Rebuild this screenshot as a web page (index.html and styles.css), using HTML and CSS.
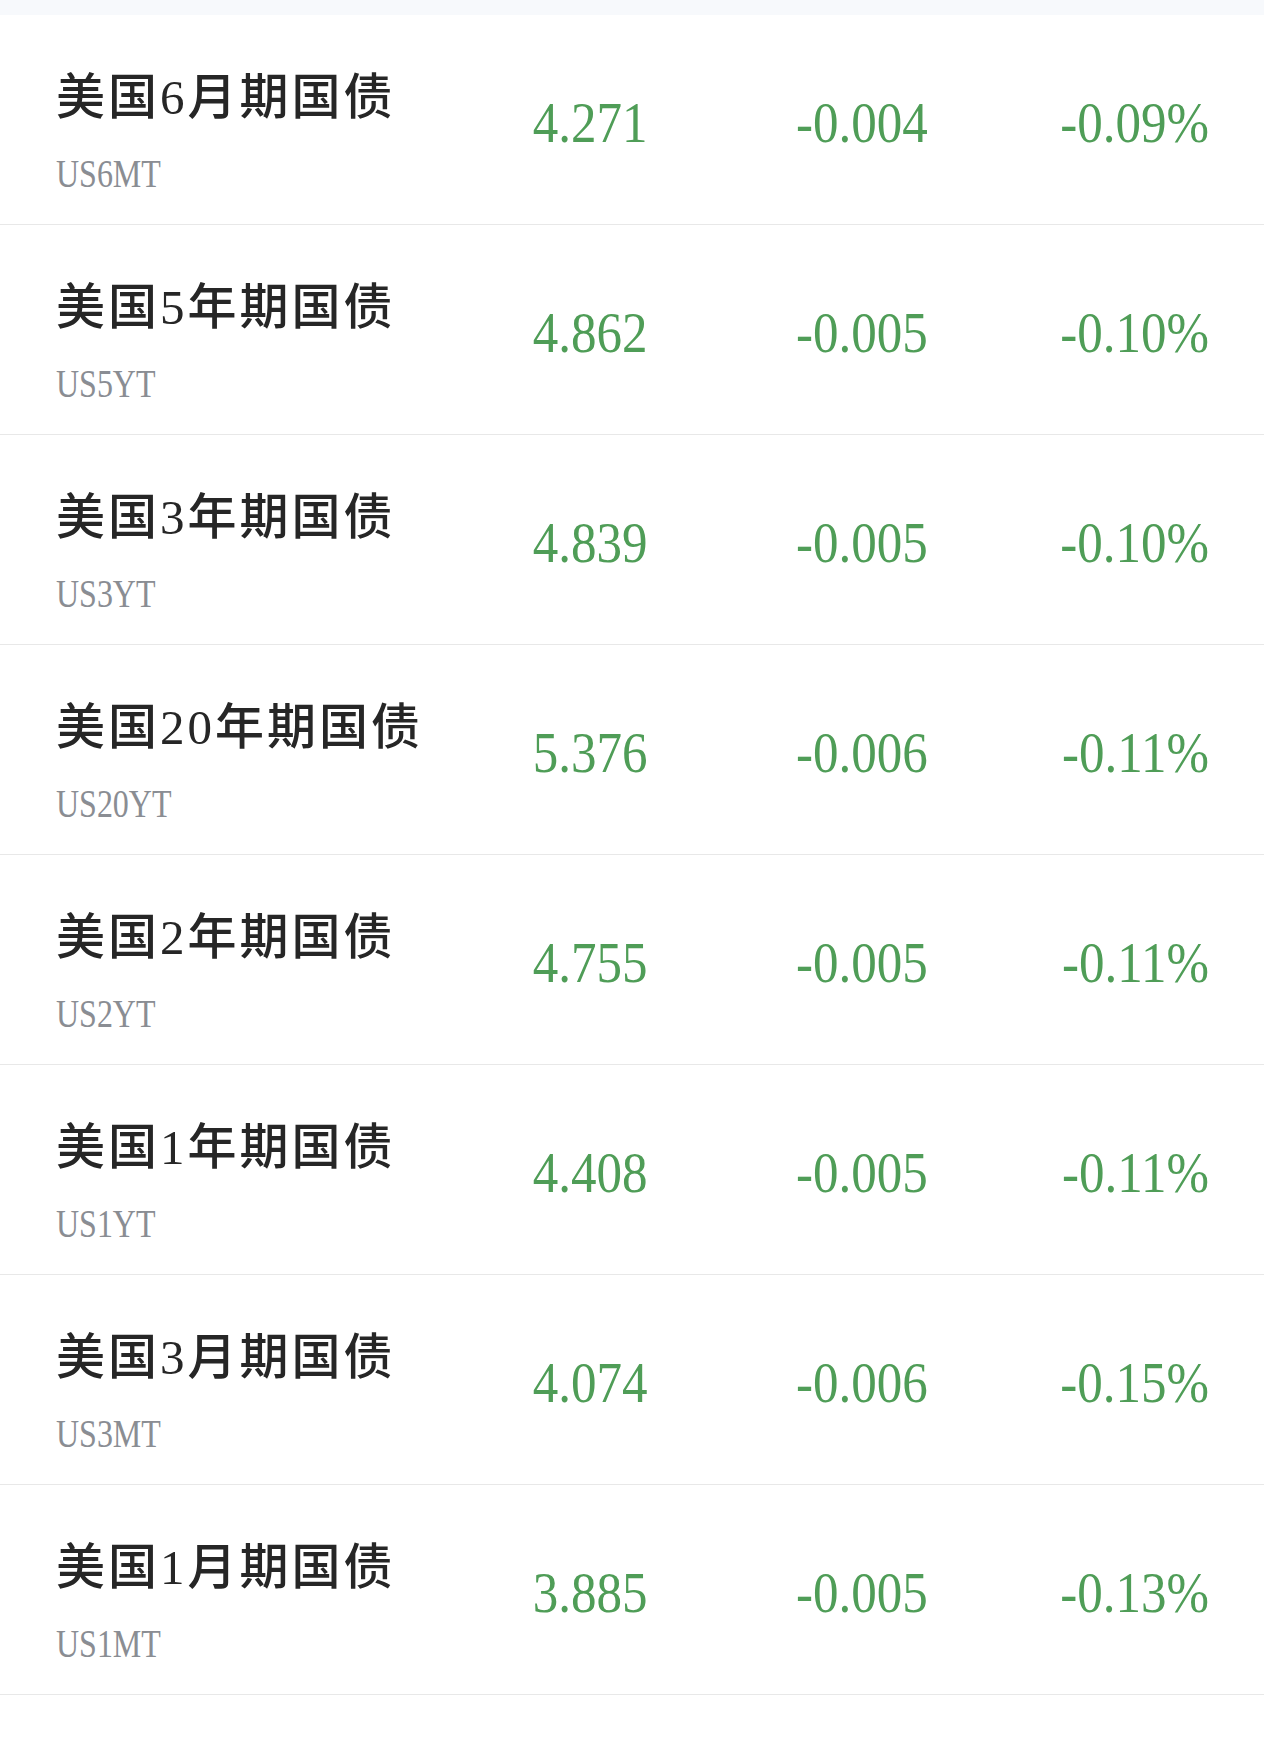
FILE: index.html
```html
<!DOCTYPE html>
<html lang="zh-CN">
<head>
  <meta charset="utf-8">
  <meta name="viewport" content="width=device-width, initial-scale=1.0">
  <title>美国国债收益率</title>
  <link rel="stylesheet" href="styles.css">
</head>

<body>
  <div class="top-strip"></div>

  <main class="quote-list">
    <div class="quote-row">
      <div class="name">
        <p class="title">美国6月期国债</p>
        <p class="code"><span>US6MT</span></p>
      </div>
      <div class="cell"><span>4.271</span></div>
      <div class="cell"><span>-0.004</span></div>
      <div class="cell"><span>-0.09%</span></div>
    </div>

    <div class="quote-row">
      <div class="name">
        <p class="title">美国5年期国债</p>
        <p class="code"><span>US5YT</span></p>
      </div>
      <div class="cell"><span>4.862</span></div>
      <div class="cell"><span>-0.005</span></div>
      <div class="cell"><span>-0.10%</span></div>
    </div>

    <div class="quote-row">
      <div class="name">
        <p class="title">美国3年期国债</p>
        <p class="code"><span>US3YT</span></p>
      </div>
      <div class="cell"><span>4.839</span></div>
      <div class="cell"><span>-0.005</span></div>
      <div class="cell"><span>-0.10%</span></div>
    </div>

    <div class="quote-row">
      <div class="name">
        <p class="title">美国20年期国债</p>
        <p class="code"><span>US20YT</span></p>
      </div>
      <div class="cell"><span>5.376</span></div>
      <div class="cell"><span>-0.006</span></div>
      <div class="cell"><span>-0.11%</span></div>
    </div>

    <div class="quote-row">
      <div class="name">
        <p class="title">美国2年期国债</p>
        <p class="code"><span>US2YT</span></p>
      </div>
      <div class="cell"><span>4.755</span></div>
      <div class="cell"><span>-0.005</span></div>
      <div class="cell"><span>-0.11%</span></div>
    </div>

    <div class="quote-row">
      <div class="name">
        <p class="title">美国1年期国债</p>
        <p class="code"><span>US1YT</span></p>
      </div>
      <div class="cell"><span>4.408</span></div>
      <div class="cell"><span>-0.005</span></div>
      <div class="cell"><span>-0.11%</span></div>
    </div>

    <div class="quote-row">
      <div class="name">
        <p class="title">美国3月期国债</p>
        <p class="code"><span>US3MT</span></p>
      </div>
      <div class="cell"><span>4.074</span></div>
      <div class="cell"><span>-0.006</span></div>
      <div class="cell"><span>-0.15%</span></div>
    </div>

    <div class="quote-row">
      <div class="name">
        <p class="title">美国1月期国债</p>
        <p class="code"><span>US1MT</span></p>
      </div>
      <div class="cell"><span>3.885</span></div>
      <div class="cell"><span>-0.005</span></div>
      <div class="cell"><span>-0.13%</span></div>
    </div>
  </main>
</body>
</html>
```

FILE: styles.css
```css
:root {
  --text-color: #262626;
  --code-color: #8a8d93;
  --down-color: #4f9d57;
  --border-color: #e8e8e8;
}

body {
  margin: 0;
  padding: 0;
  background: white;
  color: var(--text-color);
  font-family: "Liberation Serif", "Noto Sans CJK SC", serif;
}

.top-strip {
  height: 15px;
  background: #f7f9fc;
}

.quote-row {
  display: grid;
  grid-template-columns: 1fr 200px 281px 281px;
  align-items: center;
  height: 209px;
  padding: 0 55px 0 56px;
  border-bottom: 1px solid var(--border-color);
}

.name {
  align-self: start;
  padding-top: 53px;
}

.title {
  margin: 0;
  font-size: 49px;
  font-weight: 500;
  line-height: 60px;
  letter-spacing: 3px;
  white-space: nowrap;
}

.code {
  margin: 21px 0 0;
  font-size: 41px;
  line-height: 48px;
  color: var(--code-color);
}

.code span {
  display: inline-block;
  transform: scaleX(0.78);
  transform-origin: left center;
}

.cell {
  padding-top: 6px;
  text-align: right;
  font-size: 58px;
  line-height: 58px;
  color: var(--down-color);
}

.cell span {
  display: inline-block;
  transform: scaleX(0.88);
  transform-origin: right center;
}
```
